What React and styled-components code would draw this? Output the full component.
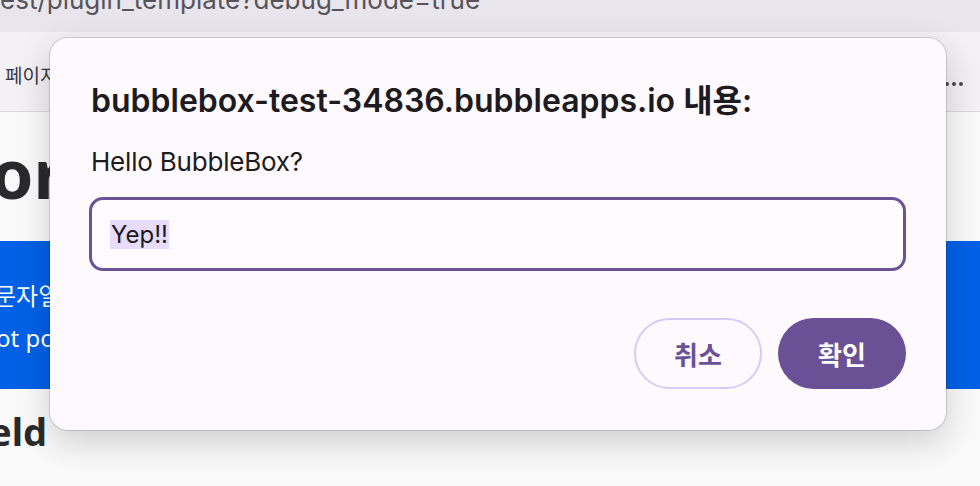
import React from 'react';
import styled, { createGlobalStyle } from 'styled-components';

const GlobalStyle = createGlobalStyle`
  html, body {
    margin: 0;
    padding: 0;
    overflow: hidden;
    background: #fafafa;
  }
  body {
    font-family: "Noto Sans", "Noto Sans CJK KR", sans-serif;
  }
`;

const Screen = styled.div`
  position: relative;
  width: 980px;
  height: 486px;
  overflow: hidden;
  background: #fafafa;
`;

const AddressBar = styled.div`
  height: 32px;
  overflow: hidden;
  background: #e9e5ed;
`;

const Url = styled.div`
  margin-top: -13px;
  font-family: Inter, "Noto Sans", sans-serif;
  font-size: 26px;
  line-height: 26px;
  color: #56545a;
  white-space: nowrap;
`;

const BookmarkBar = styled.div`
  height: 80px;
  display: flex;
  align-items: center;
  justify-content: space-between;
  padding: 6px 17px 0 5px;
  box-sizing: border-box;
  background: #f4f1f6;
  border-bottom: 1px solid #dcd9de;
`;

const Bookmark = styled.span`
  font-family: "Noto Sans CJK KR", sans-serif;
  font-size: 19px;
  color: #3a383d;
`;

const More = styled.span`
  display: flex;
  gap: 3px;
  margin-top: 18px;
`;

const Dot = styled.i`
  width: 4px;
  height: 4px;
  border-radius: 50%;
  background: #4a484d;
`;

const Page = styled.div`
  margin-left: -9px;
  white-space: nowrap;
`;

const Heading = styled.h1`
  margin: 27px 0 0;
  font-size: 68px;
  line-height: 1;
  font-weight: 700;
  color: #2a2a2c;
  height: 102px;
`;

const Banner = styled.div`
  height: 148px;
  margin-left: 9px;
  padding: 34px 0 0 0;
  box-sizing: border-box;
  background: #0061e6;
  color: #fff;
  font-size: 24px;
  line-height: 42px;
`;

const BannerLine = styled.div`
  margin-left: ${p => p.shift}px;
`;

const SubHeading = styled.h2`
  margin: 20px 0 0 -2px;
  font-size: 38px;
  line-height: 1.2;
  font-weight: 700;
  color: #2a2a2c;
`;

const Dialog = styled.div`
  position: absolute;
  left: 50px;
  top: 38px;
  width: 896px;
  height: 392px;
  box-sizing: border-box;
  padding: 43px 40px 41px 39px;
  display: flex;
  flex-direction: column;
  background: #fdf9fd;
  border-radius: 18px;
  box-shadow: 0 0 0 1px rgba(0, 0, 0, 0.14), 0 12px 36px rgba(0, 0, 0, 0.18);
  font-family: Inter, "Noto Sans CJK KR", sans-serif;
`;

const Title = styled.h2`
  margin: 0 0 0 2px;
  font-size: 32px;
  line-height: 40px;
  font-weight: 600;
  color: #1d1b20;
`;

const Message = styled.p`
  margin: 25px 0 0 2px;
  font-size: 26px;
  line-height: 32px;
  letter-spacing: -0.2px;
  color: #1d1b20;
`;

const Field = styled.div`
  margin-top: 19px;
  height: 74px;
  box-sizing: border-box;
  display: flex;
  align-items: center;
  padding: 0 18px;
  border: 3px solid #6b5296;
  border-radius: 14px;
  background: #fefbff;
`;

const Selected = styled.span`
  font-size: 24px;
  line-height: 29px;
  padding: 0 1px;
  color: #1d1b20;
  background: #e7dcfc;
`;

const Actions = styled.div`
  margin-top: auto;
  display: flex;
  justify-content: flex-end;
  gap: 16px;
`;

const Button = styled.button`
  width: 128px;
  height: 71px;
  box-sizing: border-box;
  border-radius: 36px;
  font-family: "Noto Sans CJK KR", sans-serif;
  font-size: 26px;
  font-weight: 700;
  cursor: pointer;
  border: ${p => (p.primary ? 'none' : '2px solid #d8caf7')};
  background: ${p => (p.primary ? '#6a5196' : 'transparent')};
  color: ${p => (p.primary ? '#ffffff' : '#6a5196')};
`;

export default function App() {
  return (
    <Screen>
      <GlobalStyle />
      <AddressBar>
        <Url>est/plugin_template?debug_mode=true</Url>
      </AddressBar>
      <BookmarkBar>
        <Bookmark>페이지</Bookmark>
        <More>
          <Dot />
          <Dot />
          <Dot />
        </More>
      </BookmarkBar>
      <Page>
        <Heading>or</Heading>
        <Banner>
          <BannerLine shift={-6}>문자열을 입력하세요</BannerLine>
          <BannerLine shift={-4}>ot possible</BannerLine>
        </Banner>
        <SubHeading>eld</SubHeading>
      </Page>
      <Dialog>
        <Title>bubblebox-test-34836.bubbleapps.io 내용:</Title>
        <Message>Hello BubbleBox?</Message>
        <Field>
          <Selected>Yep!!</Selected>
        </Field>
        <Actions>
          <Button>취소</Button>
          <Button primary>확인</Button>
        </Actions>
      </Dialog>
    </Screen>
  );
}
